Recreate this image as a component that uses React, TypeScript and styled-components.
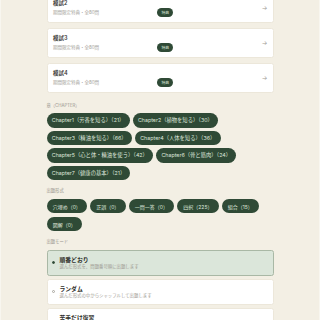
import React from "react";
import styled, { createGlobalStyle } from "styled-components";

const Global = createGlobalStyle`
  html, body { margin: 0; padding: 0; background: #f3efe4; }
  body { font-family: Inter, "Noto Sans CJK JP", sans-serif; -webkit-font-smoothing: antialiased; }
  * { box-sizing: border-box; }
`;

const Page = styled.div`
  width: 320px;
  min-height: 320px;
  overflow: hidden;
  border-left: 1px solid #f8f6ef;
  border-right: 1px solid #f8f6ef;
`;

const Main = styled.main`
  width: 227px;
  margin: -7px auto 0;
  display: flex;
  flex-direction: column;
`;

const CardList = styled.div`
  display: flex;
  flex-direction: column;
  gap: 5px;
`;

const Card = styled.div`
  height: 30px;
  background: #ffffff;
  border: 1px solid #ece7da;
  border-radius: 2.5px;
  padding: 0 5px 0 5.5px;
  display: grid;
  grid-template-columns: 1fr 1fr auto;
  align-items: center;
`;

const CardText = styled.div`
  display: flex;
  flex-direction: column;
  gap: 3.5px;
`;

const CardTitle = styled.div`
  font-size: 5.5px;
  line-height: 6.5px;
  font-weight: 600;
  color: #3a3a36;
`;

const CardSub = styled.div`
  font-size: 4.5px;
  line-height: 5.5px;
  color: #a5a29a;
`;

const Badge = styled.span`
  justify-self: start;
  height: 9px;
  width: 16px;
  border-radius: 5px;
  background: #2f4a36;
  color: #dfe7dc;
  font-size: 3.8px;
  display: inline-flex;
  align-items: center;
  justify-content: center;
`;

const Arrow = styled.span`
  font-size: 6px;
  color: #9c9a93;
  line-height: 6px;
`;

const Section = styled.section<{ $top: number }>`
  margin-top: ${(p) => p.$top}px;
  display: flex;
  flex-direction: column;
  gap: 5px;
`;

const Label = styled.div`
  font-size: 4.3px;
  line-height: 5.5px;
  color: #97948c;
`;

const ChipWrap = styled.div<{ $gap: number }>`
  display: flex;
  flex-wrap: wrap;
  column-gap: 3px;
  row-gap: ${(p) => p.$gap}px;
`;

const Chip = styled.span<{ $pad: number; $size: number }>`
  height: 14.6px;
  padding: 0 ${(p) => p.$pad}px;
  border-radius: 8px;
  background: #2f4a36;
  color: #dfe6dc;
  font-size: ${(p) => p.$size}px;
  display: inline-flex;
  align-items: center;
  white-space: nowrap;
`;

const Options = styled.div`
  display: flex;
  flex-direction: column;
  gap: 3.5px;
`;

const Option = styled.div<{ $active?: boolean }>`
  height: 25.7px;
  border-radius: 2.5px;
  background: ${(p) => (p.$active ? "#dbe6da" : "#ffffff")};
  border: 1px solid ${(p) => (p.$active ? "#a9b8a5" : "#ece7da")};
  display: flex;
  align-items: center;
  gap: 4.5px;
  padding-left: 4.5px;
`;

const Radio = styled.span<{ $active?: boolean }>`
  width: 3px;
  height: 3px;
  border-radius: 50%;
  flex: none;
  background: ${(p) => (p.$active ? "#2f4a36" : "#ffffff")};
  border: ${(p) => (p.$active ? "0.6px solid #2f4a36" : "0.6px solid #a8a59d")};
`;

const OptText = styled.div`
  display: flex;
  flex-direction: column;
  gap: 1.5px;
`;

const OptTitle = styled.div`
  font-size: 5.8px;
  line-height: 7px;
  font-weight: 700;
  color: #2e2e2a;
`;

const OptSub = styled.div`
  font-size: 4.4px;
  line-height: 5.5px;
  color: #9d9a92;
`;

const exams = ["模試2", "模試3", "模試4"];
const chapters = [
  "Chapter1（芳香を知る）（21）",
  "Chapter2（植物を知る）（30）",
  "Chapter3（精油を知る）（66）",
  "Chapter4（人体を知る）（36）",
  "Chapter5（心と体・精油を使う）（42）",
  "Chapter6（骨と筋肉）（24）",
  "Chapter7（健康の基本）（21）",
];
const formats = ["穴埋め（0）", "正誤（0）", "一問一答（0）", "四択（225）", "組合（15）", "図解（0）"];
const modes = [
  { t: "順番どおり", s: "選んだ形式を、問題番号順に出題します", a: true },
  { t: "ランダム", s: "選んだ形式の中からシャッフルして出題します", a: false },
  { t: "苦手だけ復習", s: "間違えた問題だけを出題します", a: false },
];

export default function App() {
  return (
    <Page>
      <Global />
      <Main>
        <CardList>
          {exams.map((e) => (
            <Card key={e}>
              <CardText>
                <CardTitle>{e}</CardTitle>
                <CardSub>期間限定特典・全80問</CardSub>
              </CardText>
              <div>
                <Badge>特典</Badge>
              </div>
              <Arrow>→</Arrow>
            </Card>
          ))}
        </CardList>
        <Section $top={9.5}>
          <Label>章（CHAPTER）</Label>
          <ChipWrap $gap={3}>
            {chapters.map((c) => (
              <Chip key={c} $pad={5.3} $size={5.3}>
                {c}
              </Chip>
            ))}
          </ChipWrap>
        </Section>
        <Section $top={8}>
          <Label>出題形式</Label>
          <ChipWrap $gap={3.3}>
            {formats.map((c) => (
              <Chip key={c} $pad={6.2} $size={5}>
                {c}
              </Chip>
            ))}
          </ChipWrap>
        </Section>
        <Section $top={8}>
          <Label>出題モード</Label>
          <Options>
            {modes.map((m) => (
              <Option key={m.t} $active={m.a}>
                <Radio $active={m.a} />
                <OptText>
                  <OptTitle>{m.t}</OptTitle>
                  <OptSub>{m.s}</OptSub>
                </OptText>
              </Option>
            ))}
          </Options>
        </Section>
      </Main>
    </Page>
  );
}
